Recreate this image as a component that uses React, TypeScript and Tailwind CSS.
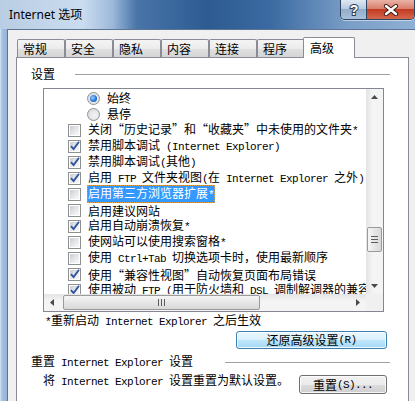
import React from "react";

const rows: [string, boolean][] = [
  ["关闭“历史记录”和“收藏夹”中未使用的文件夹*", false],
  ["禁用脚本调试 (Internet Explorer)", true],
  ["禁用脚本调试(其他)", true],
  ["启用 FTP 文件夹视图(在 Internet Explorer 之外)", true],
  ["启用第三方浏览器扩展*", false],
  ["启用建议网站", false],
  ["启用自动崩溃恢复*", true],
  ["使网站可以使用搜索窗格*", false],
  ["使用 Ctrl+Tab 切换选项卡时，使用最新顺序", false],
  ["使用“兼容性视图”自动恢复页面布局错误", true],
  ["使用被动 FTP (用于防火墙和 DSL 调制解调器的兼容性)", true],
];

const tabs = ["常规", "安全", "隐私", "内容", "连接", "程序"];

// latin runs look like SimSun's half-width glyphs
function T({ s }: { s: string }) {
  const parts = s.split(/([\x20-\x7e]+)/);
  return (
    <>
      {parts.map((p, i) =>
        /^[\x20-\x7e]+$/.test(p) ? (
          <span key={i} className="font-['Liberation_Mono'] text-[11px] tracking-[-0.6px]">
            {p}
          </span>
        ) : (
          <React.Fragment key={i}>{p}</React.Fragment>
        )
      )}
    </>
  );
}

function Check({ on }: { on: boolean }) {
  return (
    <span className="flex w-[13px] h-[13px] shrink-0 border border-[#8e8f8f] bg-white p-[1px]">
      <span className="relative flex-1 bg-[linear-gradient(135deg,#c9cdd3,#eef0f2_70%,#f8f8f8)]">
        {on && (
          <svg className="absolute -left-[1px] -top-[2px]" width="12" height="12" viewBox="0 0 12 12">
            <path d="M2 6.2 L4.6 9 L10 1.8" fill="none" stroke="#2a4f9e" strokeWidth="1.8" />
          </svg>
        )}
      </span>
    </span>
  );
}

function Radio({ on }: { on: boolean }) {
  return (
    <span className="flex items-center justify-center w-[13px] h-[13px] shrink-0 rounded-full border border-[#8e8f8f] bg-[radial-gradient(circle_at_60%_60%,#f4f4f4,#d4d7dc)]">
      {on && (
        <span className="w-[7px] h-[7px] rounded-full bg-[radial-gradient(circle_at_40%_40%,#9fd2ff,#1f6fd3_60%,#0e4fa3)]" />
      )}
    </span>
  );
}

function Tri({ dir }: { dir: "up" | "down" | "left" | "right" }) {
  const d = {
    up: "M1 6 L4.5 2 L8 6 Z",
    down: "M1 3 L4.5 7 L8 3 Z",
    left: "M6 1 L2 4.5 L6 8 Z",
    right: "M3 1 L7 4.5 L3 8 Z",
  }[dir];
  return (
    <svg width="9" height="9" viewBox="0 0 9 9">
      <path d={d} fill="#4a4a4a" />
    </svg>
  );
}

function TitleButtons() {
  return (
    <div className="flex h-[20px] self-start border border-t-0 border-[#2f4460] rounded-b-[5px] overflow-hidden shadow-[0_1px_0_rgba(255,255,255,0.5)]">
      <div className="w-[26px] flex items-center justify-center border-r border-[#2f4460] bg-[linear-gradient(#dfe8f2,#b9cbe0_45%,#93adca_50%,#a8c1dc)]">
        <svg width="14" height="16" viewBox="0 0 14 16">
          <text
            x="7"
            y="13"
            textAnchor="middle"
            fontFamily="Liberation Sans, sans-serif"
            fontWeight="700"
            fontSize="14"
            fill="#fff"
            stroke="#2c3e55"
            strokeWidth="2"
            paintOrder="stroke"
          >
            ?
          </text>
        </svg>
      </div>
      <div className="w-[47px] flex items-center justify-center bg-[linear-gradient(#eab2a5,#d8806c_45%,#c23b22_50%,#d4684f)]">
        <svg width="16" height="12" viewBox="0 0 16 12">
          <path d="M3 2 L13 10 M13 2 L3 10" stroke="#3b1a14" strokeWidth="4.2" strokeLinecap="round" />
          <path d="M3 2 L13 10 M13 2 L3 10" stroke="#fff" strokeWidth="2.4" strokeLinecap="round" />
        </svg>
      </div>
    </div>
  );
}

function Button({ label, w, focus }: { label: string; w: string; focus?: boolean }) {
  return (
    <div
      className={
        "flex items-center justify-center rounded-[3px] border shadow-[inset_0_0_0_1px_rgba(255,255,255,0.8)] " +
        w +
        (focus
          ? " border-[#3c7fb1] bg-[linear-gradient(#eaf6fd,#d9f0fc_50%,#bee6fd_50%,#a7d9f5)]"
          : " border-[#707070] bg-[linear-gradient(#f2f2f2,#ebebeb_50%,#dddddd_50%,#cfcfcf)]")
      }
    >
      <T s={label} />
    </div>
  );
}

export default function App() {
  return (
    <div className="w-[415px] h-[401px] overflow-hidden flex flex-col bg-[#8eaed2] font-['Noto_Sans_CJK_SC',sans-serif] text-[12px] leading-[16px] text-black">
      {/* title bar */}
      <div className="h-[29px] shrink-0 flex bg-[linear-gradient(90deg,#b9cde3_0%,#cadcef_20%,#9dbadb_27%,#4874a8_33%,#2d5b92_50%,#3a6aa1_65%,#7a9ec7_84%,#8fb0d4_100%)]">
        <div className="self-center pl-[9px] font-['Noto_Sans','Noto_Sans_CJK_SC',sans-serif] text-[12px]">
          Internet 选项
        </div>
        <div className="ml-auto">
          <TitleButtons />
        </div>
      </div>

      <div className="flex flex-1">
        <div className="w-[8px] shrink-0 bg-[linear-gradient(90deg,#d8e6f4,#a4c0df_30%,#93b3d8)] border-r border-[#5d7594]" />

        <div className="flex-1 bg-[#f0f0f0] border-t border-[#5d7594] pt-[7px]">
          {/* tabs */}
          <div className="flex items-end h-[20px] pl-[9px]">
            {tabs.map((t) => (
              <div
                key={t}
                className="w-[48px] h-[18px] pl-[5px] pt-[1px] border border-b-0 border-[#898c95] rounded-t-[2px] bg-[linear-gradient(#f4f4f4,#ececec_50%,#e0e0e0_50%,#d5d5d5)]"
              >
                {t}
              </div>
            ))}
            <div className="relative z-10 -ml-[2px] -mb-[1px] w-[52px] h-[21px] pl-[6px] pt-[2px] border border-b-0 border-[#898c95] rounded-t-[2px] bg-white">
              高级
            </div>
          </div>

          {/* page */}
          <div className="ml-[8px] w-[393px] h-[360px] border border-[#898c95] bg-white">
            <div className="flex items-center h-[16px] mt-[8px] pl-[14px] pr-[18px]">
              <span>设置</span>
              <div className="ml-[20px] flex-1 h-px bg-[#a0a0a0]" />
            </div>

            {/* list box */}
            <div className="mt-[6px] ml-[26px] w-[341px] h-[224px] border border-[#828790] grid grid-cols-[1fr_17px] grid-rows-[1fr_17px]">
              <div className="overflow-hidden pt-[1px] whitespace-nowrap">
                <div className="flex items-center h-[16px] pl-[43px] gap-[7px]">
                  <Radio on />
                  <span>始终</span>
                </div>
                <div className="flex items-center h-[16px] pl-[43px] gap-[7px]">
                  <Radio on={false} />
                  <span>悬停</span>
                </div>
                {rows.map(([label, on], i) => (
                  <div key={i} className="flex items-center h-[16px] pl-[24px]">
                    <Check on={on} />
                    <span
                      className={
                        "ml-[6px] leading-[13px] border " +
                        (i === 4
                          ? "border-dotted border-[#e0a040] bg-[#3399ff] text-white"
                          : "border-transparent")
                      }
                    >
                      <T s={label} />
                    </span>
                  </div>
                ))}
              </div>

              {/* vertical scrollbar */}
              <div className="flex flex-col bg-[linear-gradient(90deg,#e3e4e6,#f4f4f5_40%,#f4f4f5)]">
                <div className="h-[17px] flex items-center justify-center">
                  <Tri dir="up" />
                </div>
                <div className="h-[121px]" />
                <div className="mx-[1px] h-[25px] rounded-[2px] border border-[#9a9a9a] bg-[linear-gradient(90deg,#f6f6f6,#e6e6e6_50%,#d8d8d8)] flex flex-col items-center justify-center gap-[2px]">
                  <div className="w-[7px] h-px bg-[#5c5c5c]" />
                  <div className="w-[7px] h-px bg-[#5c5c5c]" />
                  <div className="w-[7px] h-px bg-[#5c5c5c]" />
                </div>
                <div className="flex-1" />
                <div className="h-[17px] flex items-center justify-center">
                  <Tri dir="down" />
                </div>
              </div>

              {/* horizontal scrollbar */}
              <div className="flex bg-[linear-gradient(#e3e4e6,#f4f4f5_40%,#f4f4f5)]">
                <div className="w-[17px] flex items-center justify-center">
                  <Tri dir="left" />
                </div>
                <div className="w-[2px]" />
                <div className="my-[1px] w-[197px] rounded-[2px] border border-[#9a9a9a] bg-[linear-gradient(#f6f6f6,#e6e6e6_50%,#d8d8d8)] flex items-center justify-center gap-[2px]">
                  <div className="h-[7px] w-px bg-[#5c5c5c]" />
                  <div className="h-[7px] w-px bg-[#5c5c5c]" />
                  <div className="h-[7px] w-px bg-[#5c5c5c]" />
                </div>
                <div className="flex-1" />
                <div className="w-[17px] flex items-center justify-center">
                  <Tri dir="right" />
                </div>
              </div>
              <div className="bg-[#f0f0f0]" />
            </div>

            <div className="h-[16px] ml-[28px] whitespace-nowrap">
              <T s="*重新启动 Internet Explorer 之后生效" />
            </div>

            <div className="mt-[3px] flex justify-end pr-[21px]">
              <Button label="还原高级设置(R)" w="w-[151px] h-[18px]" focus />
            </div>

            <div className="mt-[5px] flex items-center h-[16px] pl-[14px] pr-[18px] whitespace-nowrap">
              <span>
                <T s="重置 Internet Explorer 设置" />
              </span>
              <div className="ml-auto w-[165px] h-px bg-[#a0a0a0]" />
            </div>

            <div className="mt-[2px] flex items-start pr-[21px] whitespace-nowrap">
              <span className="ml-[26px]">
                <T s="将 Internet Explorer 设置重置为默认设置。" />
              </span>
              <div className="ml-auto mt-[3px]">
                <Button label="重置(S)..." w="w-[88px] h-[19px]" />
              </div>
            </div>
          </div>
        </div>
      </div>
    </div>
  );
}
